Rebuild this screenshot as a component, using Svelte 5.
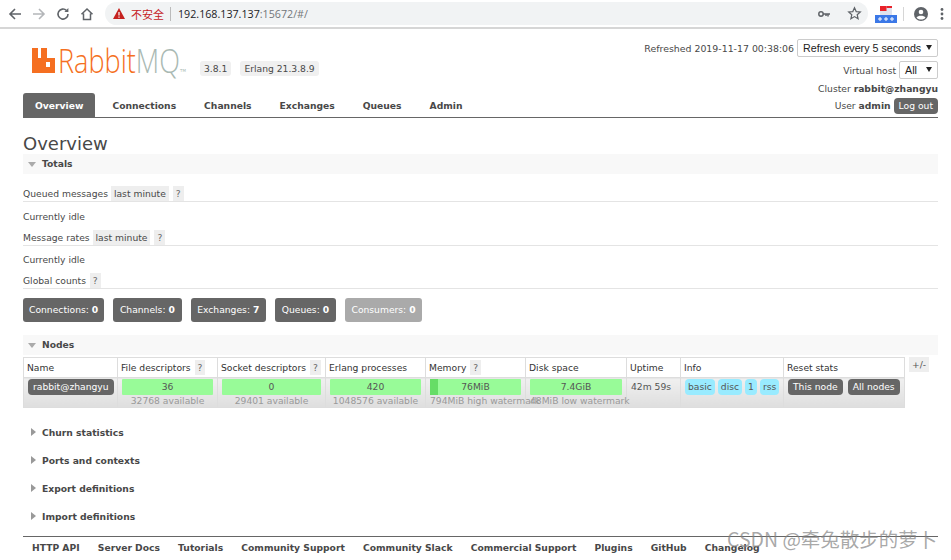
<script lang="ts">
	const tabs: string[] = ['Overview', 'Connections', 'Channels', 'Exchanges', 'Queues', 'Admin'];
	const counts: { label: string; value: number; muted?: boolean }[] = [
		{ label: 'Connections', value: 0 },
		{ label: 'Channels', value: 0 },
		{ label: 'Exchanges', value: 7 },
		{ label: 'Queues', value: 0 },
		{ label: 'Consumers', value: 0, muted: true }
	];
	const closed_sections: string[] = [
		'Churn statistics',
		'Ports and contexts',
		'Export definitions',
		'Import definitions'
	];
	const footer_links: string[] = [
		'HTTP API',
		'Server Docs',
		'Tutorials',
		'Community Support',
		'Community Slack',
		'Commercial Support',
		'Plugins',
		'GitHub',
		'Changelog'
	];
</script>

<div class="page">
	<div class="chrome">
		<svg class="nav" width="16" height="16" viewBox="0 0 16 16"><path d="M14 8H3M8 3 3 8l5 5" fill="none" stroke="#5f6368" stroke-width="1.6"/></svg>
		<svg class="nav" width="16" height="16" viewBox="0 0 16 16"><path d="M2 8h11M8 3l5 5-5 5" fill="none" stroke="#b4b6b9" stroke-width="1.6"/></svg>
		<svg class="nav" width="16" height="16" viewBox="0 0 16 16"><path d="M13 8a5 5 0 1 1-1.5-3.5" fill="none" stroke="#5f6368" stroke-width="1.6"/><path d="M13.4 2v4h-4z" fill="#5f6368"/></svg>
		<svg class="nav" width="16" height="16" viewBox="0 0 16 16"><path d="M2.5 8.2 8 3l5.5 5.2M4.5 7.5V13.500h7V7.500" fill="none" stroke="#5f6368" stroke-width="1.500"/></svg>
		<div class="omnibox">
			<svg width="14" height="13" viewBox="0 0 14 13"><path d="M7 1 13 12H1z" fill="#c5221f"/><path d="M7 5v3.500M7 9.500v1.200" stroke="#fff" stroke-width="1.200"/></svg>
			<span class="insecure">不安全</span>
			<span class="sep"></span>
			<span class="url">192.168.137.137<span class="url-rest">:15672/#/</span></span>
			<span class="omni-icons">
				<svg width="14" height="14" viewBox="0 0 14 14"><circle cx="4" cy="7" r="2.200" fill="none" stroke="#5f6368" stroke-width="1.500"/><path d="M6 7h7M11 7v2.500M9 7v2" fill="none" stroke="#5f6368" stroke-width="1.500"/></svg>
				<svg width="15" height="15" viewBox="0 0 15 15"><path d="m7.500 1.800 1.700 3.800 4.100.4-3.100 2.700.9 4-3.600-2.100-3.600 2.100.9-4L1.700 6l4.100-.4z" fill="none" stroke="#5f6368" stroke-width="1.200"/></svg>
			</span>
		</div>
		<svg class="ext" width="22" height="18" viewBox="0 0 22 18">
			<path d="M5 1h12v9H5z" fill="#dfe3ee"/>
			<path d="M5 1h6.500v5H5z" fill="#e8222a"/>
			<path d="M11.500 1H17v2h-5.500z" fill="#e8222a"/>
			<path d="M0 10h22v8H0z" fill="#3b78e7"/>
			<path d="M3 14h4M5 12v4M9 14h4M11 12v4M15 14h4M17 12v4" stroke="#fff"/>
		</svg>
		<span class="chrome-sep"></span>
		<svg width="16" height="16" viewBox="0 0 16 16"><circle cx="8" cy="8" r="7" fill="#5f6368"/><circle cx="8" cy="6" r="2.300" fill="#fff"/><path d="M3.500 11.500c1.500-2.500 7.500-2.500 9 0-1 1.500-2.500 2-4.500 2s-3.500-.5-4.500-2z" fill="#fff"/></svg>
		<svg class="dots" width="4" height="14" viewBox="0 0 4 14"><circle cx="2" cy="2.500" r="1.400" fill="#5f6368"/><circle cx="2" cy="7" r="1.400" fill="#5f6368"/><circle cx="2" cy="11.500" r="1.400" fill="#5f6368"/></svg>
	</div>

	<div class="content">
		<header class="top">
			<div class="brand">
				<svg class="logo-mark" width="23" height="25" viewBox="0 0 23 25">
					<path d="M0 0h6v10h3V0h6v10h8v15H0z" fill="#f56f21"/>
					<path d="M14 14h4v5h-4z" fill="#fff"/>
				</svg>
				<span class="logo-word">Rabbit<span class="logo-mq">MQ</span></span>
				<span class="tm">TM</span>
				<span class="version first">3.8.1</span>
				<span class="version">Erlang 21.3.8.9</span>
			</div>
			<div class="status">
				<div class="status-row">
					<span class="refreshed">Refreshed 2019-11-17 00:38:06</span>
					<span class="select wide">Refresh every 5 seconds<i class="caret"></i></span>
				</div>
				<div class="status-row">
					<span>Virtual host</span>
					<span class="select">All<i class="caret"></i></span>
				</div>
				<div class="status-row line cluster">Cluster&nbsp;<b>rabbit@zhangyu</b></div>
				<div class="status-row line">User&nbsp;<b>admin</b><span class="pill logout">Log out</span></div>
			</div>
		</header>

		<nav class="tabs">
			{#each tabs as tab, i}
				<span class="tab" class:active={i === 0}>{tab}</span>
			{/each}
		</nav>

		<main>
			<h1>Overview</h1>
			<div class="section-head"><i class="tri down"></i>Totals</div>

			<div class="rate-head first-rate">Queued messages <span class="tag">last minute</span> <span class="tag help">?</span></div>
			<p class="idle">Currently idle</p>
			<div class="rate-head">Message rates <span class="tag">last minute</span> <span class="tag help">?</span></div>
			<p class="idle">Currently idle</p>
			<div class="rate-head">Global counts <span class="tag help">?</span></div>

			<div class="counts">
				{#each counts as c}
					<span class="count" class:muted={c.muted}>{c.label}: <b>{c.value}</b></span>
				{/each}
			</div>

			<div class="section-head nodes-head"><i class="tri down"></i>Nodes</div>

			<div class="table-wrap">
				<table>
					<colgroup>
						<col style="width:94px" />
						<col style="width:100px" />
						<col style="width:108px" />
						<col style="width:100px" />
						<col style="width:100px" />
						<col style="width:101px" />
						<col style="width:54px" />
						<col style="width:103px" />
						<col style="width:121px" />
					</colgroup>
					<thead>
						<tr>
							<th>Name</th>
							<th>File descriptors <span class="tag help">?</span></th>
							<th>Socket descriptors <span class="tag help">?</span></th>
							<th>Erlang processes</th>
							<th>Memory <span class="tag help">?</span></th>
							<th>Disk space</th>
							<th>Uptime</th>
							<th>Info</th>
							<th>Reset stats</th>
						</tr>
					</thead>
					<tbody>
						<tr>
							<td><span class="pill">rabbit@zhangyu</span></td>
							<td><div class="bar">36</div><div class="sub">32768 available</div></td>
							<td><div class="bar">0</div><div class="sub">29401 available</div></td>
							<td><div class="bar">420</div><div class="sub">1048576 available</div></td>
							<td>
								<div class="bar"><i class="fill" style="width:8px"></i>76MiB</div>
								<div class="sub over">794MiB high watermark</div>
							</td>
							<td><div class="bar">7.4GiB</div><div class="sub over">48MiB low watermark</div></td>
							<td class="uptime">42m 59s</td>
							<td class="info">
								<span class="chip">basic</span><span class="chip">disc</span><span class="chip">1</span><span class="chip">rss</span>
							</td>
							<td class="reset"><span class="pill">This node</span><span class="pill">All nodes</span></td>
						</tr>
					</tbody>
				</table>
				<span class="tag plus">+/-</span>
			</div>

			<div class="closed">
				{#each closed_sections as s}
					<div class="closed-row"><i class="tri right"></i>{s}</div>
				{/each}
			</div>
		</main>

		<footer>
			{#each footer_links as link}
				<span>{link}</span>
			{/each}
		</footer>
	</div>

	<div class="watermark">CSDN @牵兔散步的萝卜</div>
</div>

<style>
	:global(body) {
		margin: 0;
		background: #fff;
	}

	.page {
		position: relative;
		width: 951px;
		height: 560px;
		overflow: hidden;
		font-family: 'DejaVu Sans', Verdana, sans-serif;
		font-size: 9.2px;
		color: #484848;
		background: #fff;
	}

	.chrome {
		height: 27px;
		display: flex;
		align-items: center;
		padding-left: 7px;
		border-bottom: 2px solid #d6d6d6;
	}
	.nav {
		margin-right: 8px;
		flex: none;
	}
	.omnibox {
		width: 763px;
		height: 23px;
		margin-left: 2px;
		border-radius: 12px;
		background: #f1f3f4;
		display: flex;
		align-items: center;
		padding-left: 7px;
		box-sizing: border-box;
	}
	.insecure {
		color: #c5221f;
		font-family: 'Noto Sans CJK SC', sans-serif;
		font-size: 11px;
		margin-left: 5px;
	}
	.sep {
		width: 1px;
		height: 14px;
		background: #bbb;
		margin: 0 7px 0 6px;
	}
	.url {
		color: #202124;
		font-family: 'Open Sans', sans-serif;
		font-size: 10.7px;
	}
	.url-rest {
		color: #72767a;
	}
	.omni-icons {
		margin-left: auto;
		margin-right: 6px;
		display: flex;
		align-items: center;
		gap: 16px;
	}
	.ext {
		margin-left: 7px;
		flex: none;
	}
	.chrome-sep {
		width: 1px;
		height: 14px;
		background: #d6d6d6;
		margin: 0 9px 0 6px;
	}
	.dots {
		margin-left: 11px;
	}

	.content {
		padding: 0 13px 0 23px;
	}

	.top {
		display: flex;
		justify-content: space-between;
		height: 63px;
	}
	.brand {
		display: flex;
		align-items: flex-start;
		padding: 19px 0 0 9px;
		height: 44px;
	}
	.logo-mark {
		flex: none;
	}
	.logo-word {
		display: inline-block;
		width: 122px;
		font-family: 'Open Sans', sans-serif;
		font-weight: 300;
		font-size: 33px;
		line-height: 26px;
		color: #f56f21;
		margin-left: 3px;
		transform: scaleX(0.82);
		transform-origin: left center;
		white-space: nowrap;
	}
	.logo-mq {
		color: #a9b9b3;
	}
	.tm {
		font-size: 4px;
		color: #a9b9b3;
		margin-top: 20px;
		width: 7px;
	}
	.version {
		background: #f0f0f0;
		border-radius: 3px;
		padding: 2px 4px;
		line-height: 11px;
		margin-top: 13px;
		margin-left: 9px;
		color: #484848;
	}
	.version.first {
		margin-left: 13px;
	}
	.status {
		padding-top: 10px;
		display: flex;
		flex-direction: column;
		align-items: flex-end;
		gap: 4px;
		height: 85px;
		box-sizing: border-box;
		flex: none;
	}
	.refreshed {
		font-size: 9.4px;
	}
	.status-row {
		display: flex;
		align-items: center;
		gap: 3px;
		white-space: nowrap;
	}
	.status-row.line {
		gap: 0;
		height: 16px;
		line-height: 16px;
		margin-bottom: -3px;
	}
	.status-row.cluster {
		margin-top: -2px;
	}
	.select {
		position: relative;
		height: 18px;
		border: 1px solid #ccc;
		border-radius: 2px;
		box-sizing: border-box;
		padding: 0 20px 0 5px;
		line-height: 16px;
		color: #222;
		display: inline-block;
		font-family: 'Liberation Sans', sans-serif;
		font-size: 10.7px;
		background: #fff;
		white-space: nowrap;
	}
	.select.wide {
		width: 141px;
	}
	.caret {
		position: absolute;
		right: 5px;
		top: 5px;
		border-left: 3px solid transparent;
		border-right: 3px solid transparent;
		border-top: 5px solid #222;
	}
	.pill {
		background: #666;
		color: #fff;
		border-radius: 4px;
		padding: 0 5px;
		line-height: 16px;
		display: inline-block;
	}
	.logout {
		margin-left: 3px;
	}

	.tabs {
		display: flex;
		height: 24px;
		border-bottom: 1px solid #666;
		margin-top: 1px;
		font-weight: bold;
	}
	.tab {
		padding: 0 12px;
		line-height: 25px;
		margin-right: 4px;
	}
	.active {
		background: #666;
		color: #fff;
		border-radius: 3px 3px 0 0;
		margin-right: 5px;
	}

	h1 {
		font-size: 18px;
		font-weight: normal;
		color: #484848;
		margin: 15px 0 0;
		line-height: 21px;
	}
	.section-head {
		height: 20px;
		line-height: 20px;
		background: #f8f8f8;
		font-weight: bold;
		padding-left: 5px;
		display: flex;
		align-items: center;
	}
	.tri {
		display: inline-block;
		flex: none;
	}
	.tri.down {
		border-left: 4px solid transparent;
		border-right: 4px solid transparent;
		border-top: 5px solid #aaa;
		margin-right: 6px;
	}
	.tri.right {
		border-top: 4px solid transparent;
		border-bottom: 4px solid transparent;
		border-left: 5px solid #999;
		margin-left: 8px;
		margin-right: 6px;
	}
	.rate-head {
		height: 15px;
		line-height: 15px;
		border-bottom: 1px solid #e4e4e4;
		margin-top: 6px;
	}
	.first-rate {
		margin-top: 12px;
	}
	.tag {
		background: #eee;
		padding: 0 3px;
		display: inline-block;
		line-height: 15px;
		color: #484848;
	}
	.help {
		color: #666;
		margin-left: 1px;
	}
	.idle {
		margin: 7.500px 0 0;
		line-height: 14px;
	}
	.counts {
		display: flex;
		gap: 9px;
		margin-top: 9px;
	}
	.count {
		background: #666;
		color: #fff;
		border-radius: 3px;
		padding: 0 6.700px;
		line-height: 24px;
		height: 24px;
	}
	.count:first-child {
		padding: 0 6px;
	}
	.count.muted {
		background: #aaa;
	}
	.nodes-head {
		margin-top: 13px;
	}

	.table-wrap {
		display: flex;
		align-items: flex-start;
		gap: 4px;
		margin-top: 2px;
	}
	table {
		border-collapse: collapse;
		table-layout: fixed;
		width: 881px;
		flex: none;
	}
	th {
		font-weight: normal;
		text-align: left;
		height: 19px;
		padding: 0 3px;
		border: 1px solid #ddd;
		color: #333;
		white-space: nowrap;
		background: #fff;
	}
	td {
		border: 1px solid #ddd;
		height: 30px;
		padding: 1px 4px 0;
		box-sizing: border-box;
		vertical-align: top;
		background: linear-gradient(#f0f0f0, #dedede);
		white-space: nowrap;
	}
	.bar {
		position: relative;
		height: 16px;
		line-height: 16px;
		background: #98fb98;
		border-radius: 1px;
		text-align: center;
		color: #555;
	}
	.fill {
		position: absolute;
		left: 0;
		top: 0;
		height: 16px;
		background: #66dd66;
	}
	.sub {
		text-align: center;
		color: #999;
		line-height: 12px;
	}
	.over {
		text-align: left;
	}
	.uptime {
		padding: 0 0 0 4px;
		line-height: 18px;
		color: #555;
	}
	.chip {
		background: #99ebff;
		color: #555;
		border-radius: 4px;
		padding: 0 3px;
		display: inline-block;
		line-height: 16px;
		margin-right: 3px;
	}
	.reset .pill {
		margin-right: 5px;
	}
	.plus {
		line-height: 15px;
		padding: 0 3px;
		color: #555;
	}

	.closed {
		margin-top: 10px;
	}
	.closed-row {
		height: 28px;
		display: flex;
		align-items: center;
		font-weight: bold;
	}

	footer {
		margin-top: 6px;
		border-top: 1px solid #666;
		padding: 5px 0 0 9px;
		display: flex;
		gap: 18.150px;
		font-weight: bold;
		line-height: 12px;
		white-space: nowrap;
	}

	.watermark {
		position: absolute;
		left: 727px;
		top: 527px;
		font-family: 'Noto Sans CJK SC', sans-serif;
		font-size: 19.500px;
		line-height: 24px;
		color: rgba(130, 130, 130, 0.7);
		white-space: nowrap;
	}
</style>
